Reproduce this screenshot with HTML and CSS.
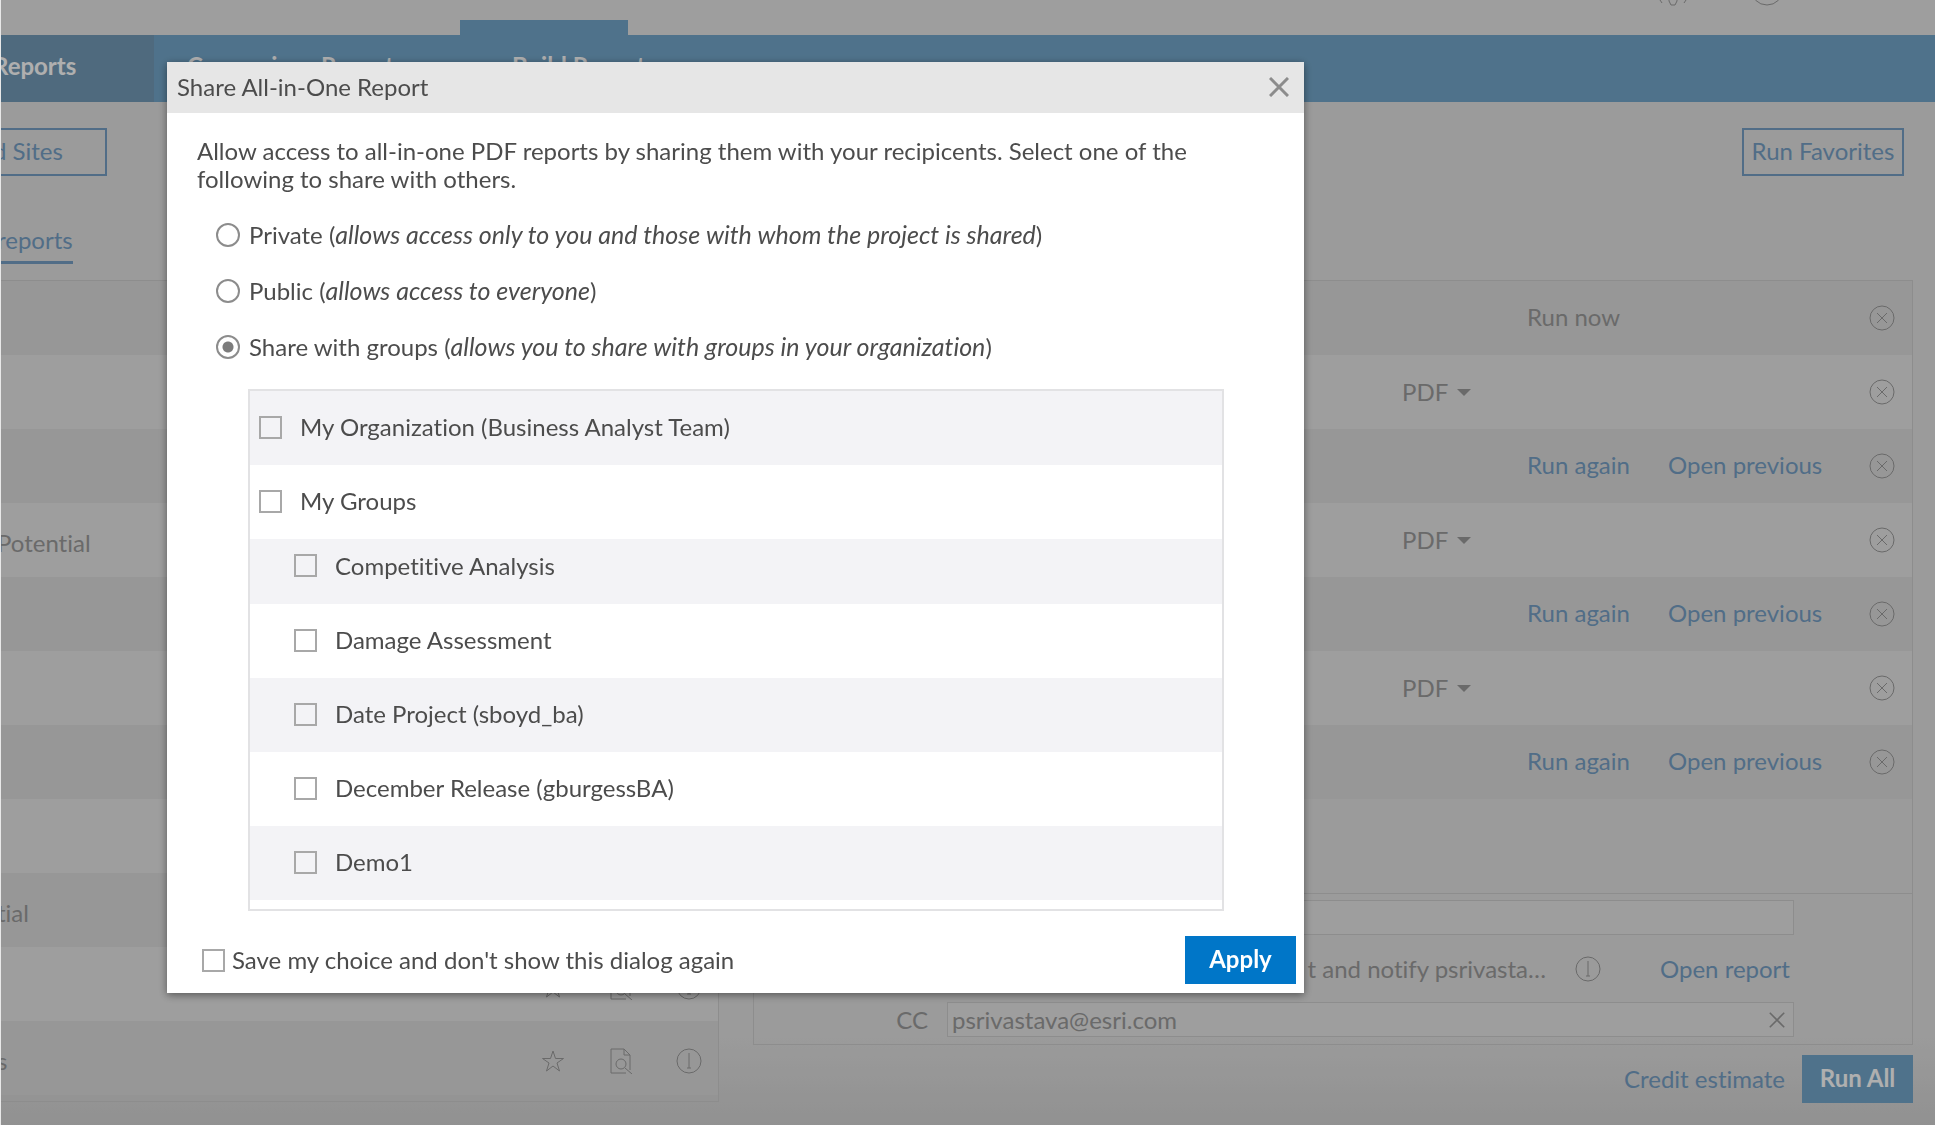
FILE: index.html
```
<!DOCTYPE html>
<html lang="en">
<head>
<meta charset="utf-8">
<title>Share All-in-One Report</title>
<link rel="stylesheet" href="styles.css">
</head>
<body>
<svg class="sprite" aria-hidden="true">
  <symbol id="remove" viewBox="0 0 26 26"><circle cx="13" cy="13" r="12"/><path d="M8 8l10 10M18 8L8 18"/></symbol>
  <symbol id="info" viewBox="0 0 26 26"><circle cx="13" cy="13" r="12"/><path d="M13 5v15M11 20h4"/></symbol>
  <symbol id="star" viewBox="0 0 26 26"><path d="M13 3l2.500 7.500h8l-6.500 4.500 2.500 8-6.500-5-6.500 5 2.500-8-6.500-4.500h8z"/></symbol>
  <symbol id="preview" viewBox="0 0 26 26"><path d="M18 25H3V1h13l6 6v15M16 1v6h6"/><circle cx="13" cy="16" r="5"/><path d="M17 20l7 6"/></symbol>
  <symbol id="cross" viewBox="0 0 20 20"><path d="M1 1l18 18M19 1L1 19"/></symbol>
</svg>

<div class="page">
  <header class="topbar">
    <svg class="topicon" viewBox="0 0 34 34"><path d="M4 27l2 3M30 27l-2 3M13 25v3l2 4h4l2-4v-3"/></svg>
    <svg class="topicon" viewBox="0 0 34 34"><circle cx="17" cy="16" r="16"/></svg>
  </header>
  <nav class="nav">
    <a class="nav-item current" href="#">Reports</a>
    <a class="nav-item compare" href="#">Comparison Reports</a>
    <a class="nav-item build" href="#">Build Reports</a>
  </nav>
  <div class="toolbar">
    <button class="outline sites">d Sites</button>
    <button class="outline">Run Favorites</button>
  </div>
  <div class="tabs"><a class="tab" href="#">reports</a></div>

  <main class="columns">
    <ul class="panel catalog">
      <li></li><li></li><li></li>
      <li>Potential</li>
      <li></li><li></li><li></li><li></li>
      <li>tial</li>
      <li><span class="tools"><svg><use href="#star"/></svg><svg><use href="#preview"/></svg><svg><use href="#info"/></svg></span></li>
      <li>s<span class="tools"><svg><use href="#star"/></svg><svg><use href="#preview"/></svg><svg><use href="#info"/></svg></span></li>
    </ul>

    <section class="queue">
      <div class="panel">
        <ul class="jobs">
          <li><span class="run">Run now</span><button class="icon" aria-label="Remove"><svg><use href="#remove"/></svg></button></li>
          <li><span class="format"><select aria-label="Format"><option>PDF</option></select></span><button class="icon" aria-label="Remove"><svg><use href="#remove"/></svg></button></li>
          <li><a class="run" href="#">Run again</a><a class="open" href="#">Open previous</a><button class="icon" aria-label="Remove"><svg><use href="#remove"/></svg></button></li>
          <li><span class="format"><select aria-label="Format"><option>PDF</option></select></span><button class="icon" aria-label="Remove"><svg><use href="#remove"/></svg></button></li>
          <li><a class="run" href="#">Run again</a><a class="open" href="#">Open previous</a><button class="icon" aria-label="Remove"><svg><use href="#remove"/></svg></button></li>
          <li><span class="format"><select aria-label="Format"><option>PDF</option></select></span><button class="icon" aria-label="Remove"><svg><use href="#remove"/></svg></button></li>
          <li><a class="run" href="#">Run again</a><a class="open" href="#">Open previous</a><button class="icon" aria-label="Remove"><svg><use href="#remove"/></svg></button></li>
        </ul>
        <form class="delivery">
          <input class="field" type="text" aria-label="Report name">
          <div class="notify"><span>t and notify psrivasta…</span><svg><use href="#info"/></svg><a href="#">Open report</a></div>
          <label for="cc">CC</label>
          <div class="field cc"><input id="cc" type="text" value="psrivastava@esri.com"><button class="clear" type="button" aria-label="Clear"><svg><use href="#cross"/></svg></button></div>
        </form>
      </div>
      <div class="actions"><a href="#">Credit estimate</a><button class="primary muted">Run All</button></div>
    </section>
  </main>
</div>

<div class="overlay">
  <section class="dialog" role="dialog" aria-labelledby="dialog-title">
    <header class="dialog-head">
      <h1 id="dialog-title">Share All-in-One Report</h1>
      <button class="close" aria-label="Close"><svg><use href="#cross"/></svg></button>
    </header>
    <div class="dialog-body">
      <p class="intro">Allow access to all-in-one PDF reports by sharing them with your recipicents. Select one of the following to share with others.</p>
      <div class="choices">
        <label><input type="radio" name="share"><span>Private (<em>allows access only to you and those with whom the project is shared</em>)</span></label>
        <label><input type="radio" name="share"><span>Public (<em>allows access to everyone</em>)</span></label>
        <label><input type="radio" name="share" checked><span>Share with groups (<em>allows you to share with groups in your organization</em>)</span></label>
      </div>
      <ul class="groups">
        <li><label><input type="checkbox">My Organization (Business Analyst Team)</label></li>
        <li><label><input type="checkbox">My Groups</label></li>
        <li class="nested first"><label><input type="checkbox">Competitive Analysis</label></li>
        <li class="nested"><label><input type="checkbox">Damage Assessment</label></li>
        <li class="nested"><label><input type="checkbox">Date Project (sboyd_ba)</label></li>
        <li class="nested"><label><input type="checkbox">December Release (gburgessBA)</label></li>
        <li class="nested"><label><input type="checkbox">Demo1</label></li>
      </ul>
    </div>
    <footer class="dialog-foot">
      <label><input type="checkbox">Save my choice and don't show this dialog again</label>
      <button class="primary">Apply</button>
    </footer>
  </section>
</div>
</body>
</html>
```
FILE: styles.css
```
* { box-sizing: border-box; }
body {
  margin: 0;
  font: 24px/28px Lato, "Liberation Sans", sans-serif;
  font-variant-ligatures: none;
  color: #4c4c4c;
}
ul { list-style: none; margin: 0; padding: 0; }
a { color: #749dc2; text-decoration: none; }
button, input, select { font: inherit; color: inherit; }
button { border: 0; padding: 0; background: none; }
svg { fill: none; stroke: currentColor; stroke-width: 1; width: 26px; height: 26px; flex: none; }
.sprite { position: absolute; width: 0; height: 0; }

/* Page behind the dialog */
.page {
  min-height: 100vh;
  border-left: 1px solid #e8e8e8;
  color: #989898;
  background: linear-gradient(to top, #d0d0d0, #dedede 90px);
  overflow: hidden;
}
.topbar {
  display: flex;
  justify-content: flex-end;
  align-items: flex-start;
  gap: 60px;
  height: 35px;
  padding-right: 151px;
  background: #e2e2e2;
}
.topicon { width: 34px; height: 34px; margin-top: -27px; }
.nav { display: flex; height: 67px; background: #72a4c7; }
.nav-item { color: #fbfbfb; font-weight: 700; padding-top: 17px; }
.current { width: 153px; text-indent: -8px; background: #7299b5; }
.compare { width: 306px; padding-left: 33px; }
.build {
  width: 168px;
  margin-top: -15px;
  padding: 32px 0 0 52px;
  background: #72a4c7;
  white-space: nowrap;
}
.toolbar {
  display: flex;
  justify-content: space-between;
  padding: 26px 31px 0 0;
}
.outline {
  width: 162px;
  height: 48px;
  padding-bottom: 2px;
  border: 2px solid #749dc2;
  color: #749dc2;
}
.sites { width: 106px; border-left: 0; text-align: left; text-indent: -8px; }
.tabs { padding-top: 50px; height: 104px; }
.tab { display: inline-block; height: 38px; border-bottom: 3px solid #749dc2; text-indent: -4px; }
.columns {
  display: grid;
  grid-template-columns: 718fr 1160fr;
  gap: 34px;
  align-items: start;
  padding-right: 22px;
}
.panel { border: 1px solid #cbcbcb; }
.panel li { height: 74px; }
.panel li:nth-child(odd) { background: #d9d9d9; }
.panel li:nth-child(even) { background: #e2e2e2; }
.catalog { border-left: 0; padding-bottom: 6px; }
.catalog li { display: flex; align-items: center; padding: 5px 16px 0 0; text-indent: -4px; }
.tools { display: flex; gap: 42px; margin-left: auto; }
.jobs { height: 613px; border-bottom: 1px solid #cbcbcb; }
.jobs li {
  display: grid;
  grid-template-columns: 1fr 125px 141px 201px 26px;
  align-items: center;
  padding-right: 17px;
}
.format { grid-column: 2; display: flex; align-items: center; }
.format::after {
  content: "";
  border: 7px solid transparent;
  border-top-color: currentColor;
  border-bottom: 0;
}
.format select { appearance: none; border: 0; padding: 0; width: 55px; background: none; }
.run { grid-column: 3; }
.open { grid-column: 4; }
.icon { grid-column: 5; height: 26px; }
.icon svg { display: block; }
.run, .open { padding-bottom: 2px; }
.delivery {
  display: grid;
  grid-template-columns: 158px 1fr;
  column-gap: 19px;
  row-gap: 10px;
  align-items: center;
  padding: 6px 118px 7px 16px;
}
.field {
  grid-column: 2;
  width: 100%;
  height: 35px;
  border: 1px solid #cbcbcb;
  background: #e2e2e2;
}
.cc { display: flex; align-items: center; padding: 0 8px 0 4px; }
.cc input { flex: 1; border: 0; padding: 0; background: none; }
.clear svg { display: block; width: 16px; height: 16px; stroke-width: 2; overflow: visible; }
.notify {
  grid-column: 2;
  display: flex;
  align-items: center;
  justify-content: flex-end;
  height: 47px;
}
.notify svg { margin: 0 59px 0 29px; }
.notify a { width: 134px; }
.actions {
  display: flex;
  align-items: center;
  justify-content: flex-end;
  gap: 17px;
  padding: 10px 0 24px;
}
.primary {
  width: 111px;
  height: 48px;
  padding-bottom: 2px;
  background: #0076c8;
  color: #fff;
  font-weight: 700;
}
.muted { background: #72a4c7; color: #fbfbfb; }

/* Dialog */
.overlay {
  position: fixed;
  inset: 0 0 0 1px;
  padding: 62px 0 0 166px;
  background: rgba(0, 0, 0, .3);
}
.dialog {
  max-width: 1137px;
  background: #fff;
  box-shadow: 0 2px 8px rgba(0, 0, 0, .45);
}
.dialog-head {
  display: flex;
  align-items: center;
  justify-content: space-between;
  height: 51px;
  padding: 0 15px 2px 10px;
  background: #e6e6e6;
}
.dialog-head h1 { margin: 0; font-size: 24px; font-weight: 400; }
.close { color: #8c8c8c; }
.close svg { display: block; width: 20px; height: 20px; stroke-width: 3; }
.dialog-body { padding: 24px 80px 0 30px; }
.intro { margin: 0 -10px 0 0; }
.choices { display: grid; gap: 28px; padding: 28px 0 0 19px; }
.choices em { font-size: 25px; line-height: 20px; }
label { display: flex; align-items: center; }
.delivery label { display: block; text-align: right; }
.choices input {
  appearance: none;
  width: 24px;
  height: 24px;
  margin: 0 9px 0 0;
  border: 2px solid #8c8c8c;
  border-radius: 50%;
  background: #fff;
}
.choices input:checked { background: radial-gradient(circle, #7c7c7c 5px, #fff 6px); }
input[type="checkbox"] {
  appearance: none;
  flex: none;
  width: 23px;
  height: 23px;
  margin: 0;
  border: 2px solid #a8a8a8;
}
.groups {
  margin: 28px 0 0 51px;
  padding-bottom: 9px;
  border: 2px solid #e2e2e4;
}
.groups li { display: flex; align-items: center; height: 74px; padding: 0 0 2px 9px; }
.groups li:nth-child(odd) { background: #f3f3f6; }
.groups label { gap: 18px; }
.groups .nested { padding-left: 44px; }
.groups .first { height: 65px; padding-bottom: 12px; }
.dialog-foot {
  display: flex;
  align-items: center;
  justify-content: space-between;
  padding: 25px 8px 9px 35px;
}
.dialog-foot label { gap: 7px; }
```
